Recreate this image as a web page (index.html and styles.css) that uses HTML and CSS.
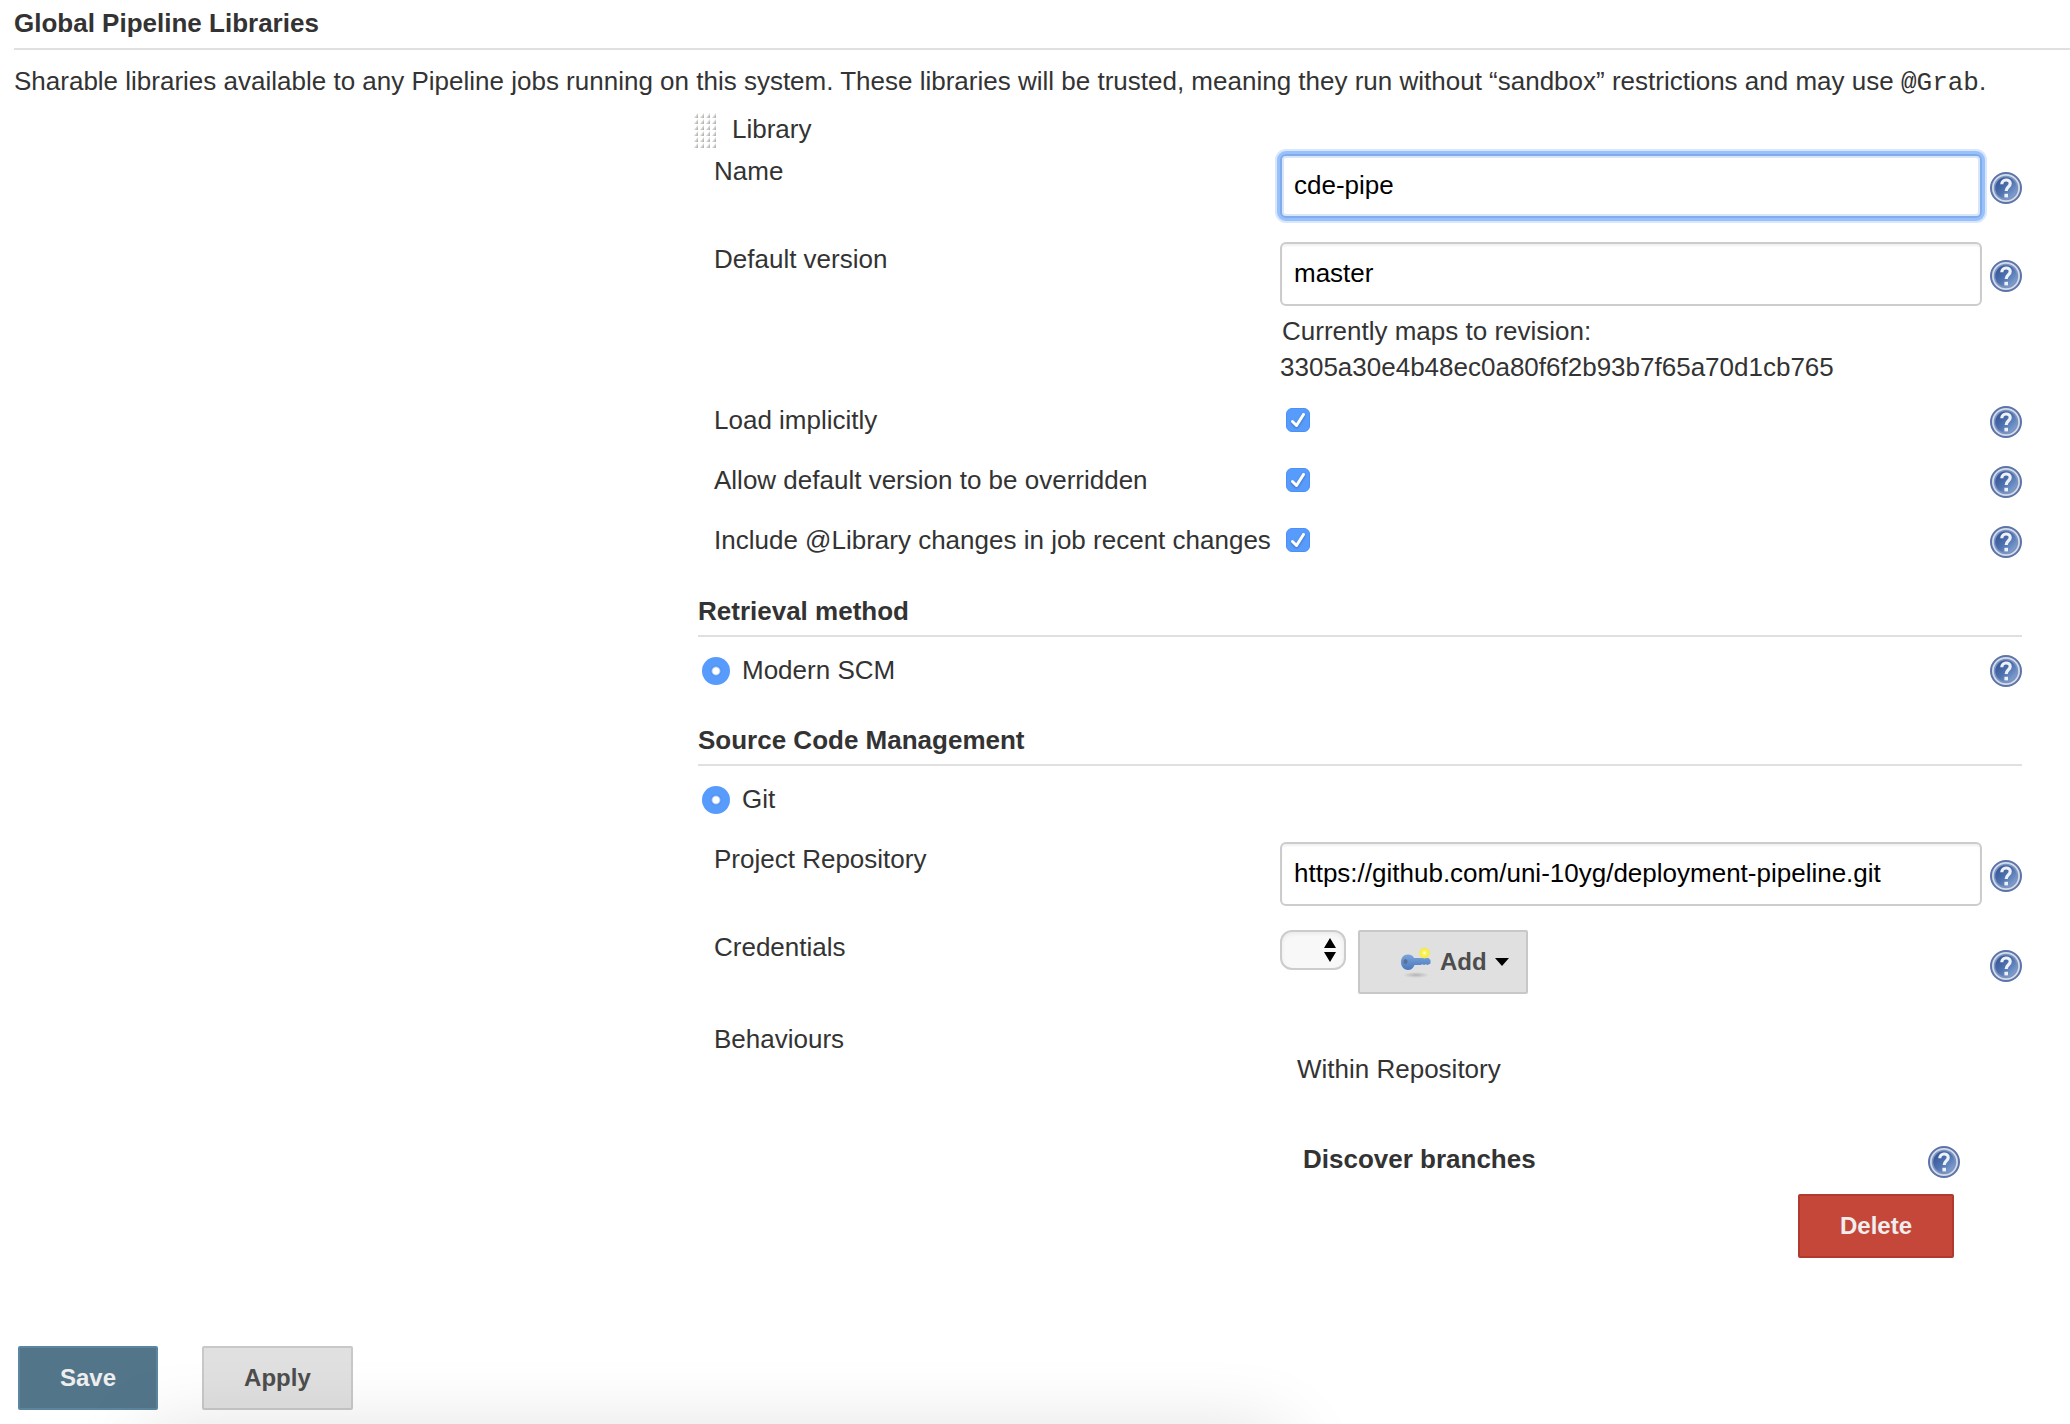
FILE: index.html
```html
<!DOCTYPE html>
<html lang="en">
<head>
<meta charset="utf-8">
<meta name="viewport" content="width=device-width, initial-scale=1">
<title>Global Pipeline Libraries</title>
<link rel="stylesheet" href="styles.css">
</head>
<body>
<svg class="sprite" aria-hidden="true" width="0" height="0">
  <defs>
    <linearGradient id="help-fill" x1="0" y1="0" x2="1" y2="1">
      <stop offset="0" stop-color="#2d4c8e"/>
      <stop offset="0.5" stop-color="#4f72b0"/>
      <stop offset="1" stop-color="#93b3dd"/>
    </linearGradient>
    <linearGradient id="key-fill" x1="0" y1="0" x2="0" y2="1">
      <stop offset="0" stop-color="#7ba4dc"/>
      <stop offset="1" stop-color="#4a78bd"/>
    </linearGradient>
    <radialGradient id="spark-fill">
      <stop offset="0" stop-color="#fffde0"/>
      <stop offset="0.35" stop-color="#fbf35c"/>
      <stop offset="0.8" stop-color="#f3ea50"/>
      <stop offset="1" stop-color="#f3ea50" stop-opacity="0"/>
    </radialGradient>
    <radialGradient id="key-shadow">
      <stop offset="0" stop-color="#000" stop-opacity="0.2"/>
      <stop offset="1" stop-color="#000" stop-opacity="0"/>
    </radialGradient>
    <pattern id="grip-dots" width="6" height="6" patternUnits="userSpaceOnUse">
      <path d="M0 6 4 1v5z" fill="#d2d2ce"/>
      <path d="M2 6 4 3v3z" fill="#b4b4b0"/>
    </pattern>
    <symbol id="help" viewBox="0 0 32 32">
      <circle cx="16" cy="16" r="15" fill="#d3dcec" stroke="#5c74a8" stroke-width="2"/>
      <circle cx="16" cy="16" r="11.500" fill="url(#help-fill)" stroke="#7f93bd" stroke-width="1.500"/>
      <path d="M11.800 12.300c0-5.600 8.400-5.600 8.400-.8 0 3.400-4 3.600-4 7.500" fill="none" stroke="#edf1f8" stroke-width="3.200"/>
      <path d="M14.400 21.800h3.600v3.600h-3.600z" fill="#edf1f8"/>
    </symbol>
  </defs>
</svg>

<form class="config">
  <h1 class="heading heading-page">Global Pipeline Libraries</h1>
  <p class="description">Sharable libraries available to any Pipeline jobs running on this system. These libraries will be trusted, meaning they run without “sandbox” restrictions and may use <code>@Grab</code>.</p>

  <div class="columns">
    <div class="library">
      <div class="library-title">
        <svg class="grip" width="24" height="36" viewBox="0 0 24 36" aria-hidden="true"><rect width="24" height="36" fill="url(#grip-dots)"/></svg>
        <span>Library</span>
      </div>

      <div class="row">
        <label class="label" for="name">Name</label>
        <div class="field"><input class="text is-focused" id="name" type="text" value="cde-pipe"></div>
        <button class="help help-low" type="button" aria-label="Help for Name"><svg><use href="#help"/></svg></button>
      </div>

      <div class="row row-noted">
        <label class="label" for="version">Default version</label>
        <div class="field">
          <input class="text" id="version" type="text" value="master">
          <div class="note"><span class="note-lead">Currently maps to revision:</span><br>3305a30e4b48ec0a80f6f2b93b7f65a70d1cb765</div>
        </div>
        <button class="help help-low" type="button" aria-label="Help for Default version"><svg><use href="#help"/></svg></button>
      </div>

      <div class="row row-check">
        <label class="label" for="implicit">Load implicitly</label>
        <div class="field"><span class="check"><input id="implicit" type="checkbox" checked><svg viewBox="0 0 24 24" aria-hidden="true"><path d="M6.500 13.500 10.500 17.500 17.500 6.500"/></svg></span></div>
        <button class="help" type="button" aria-label="Help for Load implicitly"><svg><use href="#help"/></svg></button>
      </div>

      <div class="row row-check">
        <label class="label" for="override">Allow default version to be overridden</label>
        <div class="field"><span class="check"><input id="override" type="checkbox" checked><svg viewBox="0 0 24 24" aria-hidden="true"><path d="M6.500 13.500 10.500 17.500 17.500 6.500"/></svg></span></div>
        <button class="help" type="button" aria-label="Help for Allow default version to be overridden"><svg><use href="#help"/></svg></button>
      </div>

      <div class="row row-check">
        <label class="label" for="changes">Include @Library changes in job recent changes</label>
        <div class="field"><span class="check"><input id="changes" type="checkbox" checked><svg viewBox="0 0 24 24" aria-hidden="true"><path d="M6.500 13.500 10.500 17.500 17.500 6.500"/></svg></span></div>
        <button class="help" type="button" aria-label="Help for Include @Library changes"><svg><use href="#help"/></svg></button>
      </div>

      <h2 class="heading">Retrieval method</h2>
      <div class="choice">
        <label class="radio"><input type="radio" name="retrieval" checked>Modern SCM</label>
        <button class="help" type="button" aria-label="Help for Modern SCM"><svg><use href="#help"/></svg></button>
      </div>

      <h2 class="heading">Source Code Management</h2>
      <div class="choice">
        <label class="radio"><input type="radio" name="scm" checked>Git</label>
      </div>

      <div class="row">
        <label class="label" for="repository">Project Repository</label>
        <div class="field"><input class="text" id="repository" type="text" value="https://github.com/uni-10yg/deployment-pipeline.git"></div>
        <button class="help help-low" type="button" aria-label="Help for Project Repository"><svg><use href="#help"/></svg></button>
      </div>

      <div class="row row-credentials">
        <label class="label" for="credentials">Credentials</label>
        <div class="field credentials">
          <span class="picker">
            <select id="credentials"><option value=""></option></select>
            <svg width="12" height="24" viewBox="0 0 12 24" aria-hidden="true"><path d="M0 10 6 0l6 10zM0 14h12L6 24z"/></svg>
          </span>
          <button class="button button-add" type="button">
            <svg width="32" height="32" viewBox="0 0 32 32" aria-hidden="true">
              <ellipse cx="16" cy="29" rx="13" ry="3" fill="url(#key-shadow)"/>
              <path d="M8 8.500c3 0 5 1.500 6 3.500h14.500l2 2v3.500l-3 1.500-1.500-.8-2 .8-1.500-.8-2 .8H14.500c-1 3-3.500 5-6.500 5C3.500 24 1 20 1 16s2.500-7.500 7-7.500z" fill="url(#key-fill)"/>
              <ellipse cx="5.500" cy="15.500" rx="2" ry="2.500" fill="#5b6f92"/>
              <circle cx="24.500" cy="7" r="6" fill="url(#spark-fill)"/>
            </svg>
            <span>Add</span>
            <svg class="caret" width="14" height="8" viewBox="0 0 14 8" aria-hidden="true"><path d="M0 0h14L7 8z"/></svg>
          </button>
        </div>
        <button class="help help-low" type="button" aria-label="Help for Credentials"><svg><use href="#help"/></svg></button>
      </div>

      <div class="row">
        <div class="label">Behaviours</div>
        <div class="behaviours">
          <div class="scope">Within Repository</div>
          <div class="trait">
            <strong>Discover branches</strong>
            <button class="help" type="button" aria-label="Help for Discover branches"><svg><use href="#help"/></svg></button>
          </div>
          <button class="button button-danger" type="button">Delete</button>
        </div>
      </div>
    </div>
  </div>

  <div class="actions">
    <button class="button button-primary" type="submit">Save</button>
    <button class="button" type="button">Apply</button>
  </div>
</form>
</body>
</html>
```
FILE: styles.css
```css
* {
  box-sizing: border-box;
}

body {
  margin: 0;
  background: #fff;
  color: #333;
  font: 26px/34px "Liberation Sans", Arial, sans-serif;
}

.sprite {
  position: absolute;
}

button,
input,
select {
  margin: 0;
  font: inherit;
}

svg {
  display: block;
  flex: none;
}

/* Headings */
.heading {
  margin: 0 0 16px;
  padding: 10px 0 7px;
  border-bottom: 2px solid #e0e0e0;
  font-size: 26px;
  line-height: 34px;
}

.heading-page {
  margin: 0 0 14px 14px;
  padding: 6px 0 8px;
}

.description {
  margin: 0 14px 14px;
}

.description code {
  font: 26px/30px "Liberation Mono", "Courier New", monospace;
}

/* The library panel takes the right two thirds */
.columns {
  display: grid;
  grid-template-columns: 1fr 2fr;
  column-gap: 22px;
  padding: 0 48px 0 14px;
}

.library {
  grid-column: 2;
}

.library-title {
  display: flex;
  gap: 14px;
  height: 42px;
  margin-left: -4px;
}

/* Form rows */
.row {
  display: grid;
  grid-template-columns: 582px minmax(0, 1fr) 40px;
  align-items: start;
  min-height: 36px;
  margin-bottom: 24px;
}

.row-noted {
  margin-bottom: 19px;
}

.row-check {
  line-height: 32px;
}

.row-credentials {
  min-height: 68px;
}

.label {
  padding-left: 16px;
}

.text {
  display: block;
  width: 100%;
  height: 64px;
  padding: 0 12px 2px;
  border: 2px solid #ccc;
  border-radius: 6px;
  outline: none;
  background: #fff;
  box-shadow: inset 0 2px 2px rgba(0, 0, 0, 0.06);
  color: #000;
}

.text:focus,
.text.is-focused {
  border-color: #80acec;
  box-shadow: 0 0 0 3px #98c1fb, 0 0 0 5px #d8e7fd, inset 0 0 0 2px #d9e5f8;
}

.note {
  margin-top: 7px;
  line-height: 36px;
}

.note-lead {
  padding-left: 2px;
}

.help {
  width: 32px;
  height: 32px;
  margin-top: 2px;
  padding: 0;
  border: 0;
  background: none;
  justify-self: end;
}

.help svg {
  width: 32px;
  height: 32px;
}

.help-low {
  margin-top: 18px;
}

.row-credentials .help {
  margin-top: 20px;
}

/* Tick boxes and radios */
.check {
  display: block;
  position: relative;
  width: 24px;
  height: 24px;
  margin: 4px 6px;
}

.check input {
  display: block;
  width: 24px;
  height: 24px;
  appearance: none;
  border: 1px solid #4a90f6;
  border-radius: 6px;
  background: #579bfc;
}

.check svg {
  position: absolute;
  inset: 0;
  fill: none;
  stroke: #fff;
  stroke-width: 3;
  stroke-linecap: round;
  stroke-linejoin: round;
  filter: drop-shadow(0 1px 1px rgba(0, 0, 0, 0.3));
  pointer-events: none;
}

.check input:not(:checked) + svg {
  display: none;
}

.choice {
  display: flex;
  justify-content: space-between;
  align-items: flex-start;
  height: 36px;
  margin-bottom: 24px;
}

.radio {
  display: flex;
  gap: 12px;
  padding-left: 4px;
}

.radio input {
  width: 28px;
  height: 28px;
  margin-top: 4px;
  appearance: none;
  border-radius: 50%;
  background: #579bfc;
}

.radio input:checked {
  background: radial-gradient(circle, #fff 3px, #4d8ee8 5px, #579bfc 6px);
}

/* Credentials */
.credentials {
  display: flex;
  align-items: flex-start;
  gap: 12px;
}

.picker {
  position: relative;
}

.picker select {
  display: block;
  width: 66px;
  height: 40px;
  appearance: none;
  border: 2px solid #ccc;
  border-radius: 12px;
  background: #f8f8f8;
  box-shadow: inset 0 2px 4px rgba(0, 0, 0, 0.06);
}

.picker svg {
  position: absolute;
  top: 8px;
  right: 10px;
  pointer-events: none;
}

/* Buttons */
.button {
  height: 64px;
  padding: 0 40px;
  border: 2px solid #c8c8c8;
  border-radius: 2px;
  background: #e0e0e0;
  color: #4d4d4d;
  font-size: 24px;
  font-weight: bold;
  line-height: 28px;
}

.button-add {
  display: flex;
  align-items: center;
  gap: 8px;
  padding: 0 17px 0 40px;
}

.button-primary {
  border-color: #5a879f;
  background: #53758a;
  color: #eee;
}

.button-danger {
  border-color: #b03a2e;
  background: #c5473a;
  color: #eee;
}

/* Behaviours */
.behaviours {
  display: flex;
  flex-direction: column;
  padding: 30px 28px 0 17px;
}

.scope {
  margin-bottom: 56px;
}

.trait {
  display: flex;
  justify-content: space-between;
  height: 36px;
  margin: 0 -6px 16px 6px;
}

.trait .help {
  margin-top: 4px;
}

.button-danger {
  align-self: flex-end;
}

/* Save bar, with a soft shadow rising from the window's lower edge */
.actions {
  position: relative;
  display: flex;
  gap: 44px;
  padding: 64px 18px 14px;
  overflow: hidden;
}

.actions::after {
  content: "";
  position: absolute;
  top: calc(100% + 10px);
  left: 7%;
  width: 55%;
  height: 200px;
  box-shadow: 0 0 80px rgba(0, 0, 0, 0.14);
  pointer-events: none;
}
```
